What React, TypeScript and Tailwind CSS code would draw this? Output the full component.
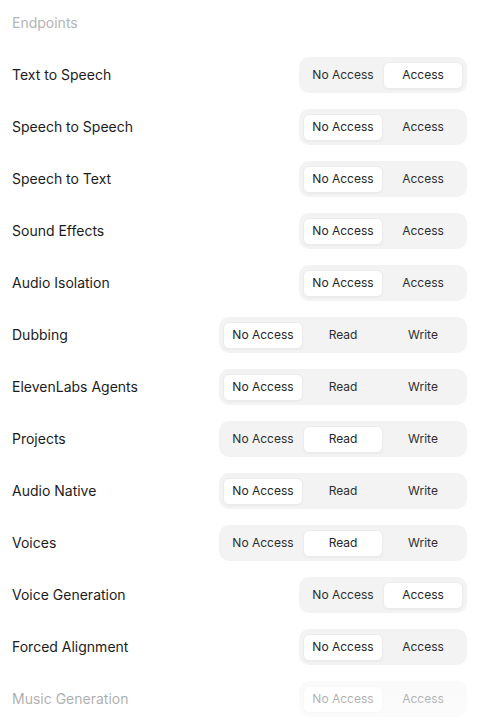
import React from 'react';

type Level = 'none' | 'access' | 'read' | 'write';

interface Endpoint {
  name: string;
  options: { key: Level; label: string }[];
  value: Level;
}

const binary = [
  { key: 'none' as Level, label: 'No Access' },
  { key: 'access' as Level, label: 'Access' },
];

const rw = [
  { key: 'none' as Level, label: 'No Access' },
  { key: 'read' as Level, label: 'Read' },
  { key: 'write' as Level, label: 'Write' },
];

const endpoints: Endpoint[] = [
  { name: 'Text to Speech', options: binary, value: 'access' },
  { name: 'Speech to Speech', options: binary, value: 'none' },
  { name: 'Speech to Text', options: binary, value: 'none' },
  { name: 'Sound Effects', options: binary, value: 'none' },
  { name: 'Audio Isolation', options: binary, value: 'none' },
  { name: 'Dubbing', options: rw, value: 'none' },
  { name: 'ElevenLabs Agents', options: rw, value: 'none' },
  { name: 'Projects', options: rw, value: 'read' },
  { name: 'Audio Native', options: rw, value: 'none' },
  { name: 'Voices', options: rw, value: 'read' },
  { name: 'Voice Generation', options: binary, value: 'access' },
  { name: 'Forced Alignment', options: binary, value: 'none' },
  { name: 'Music Generation', options: binary, value: 'none' },
];

function Segmented({ options, value }: { options: Endpoint['options']; value: Level }) {
  return (
    <div className="flex h-9 items-center rounded-[10px] bg-[#f3f3f4] p-1">
      {options.map((o) => (
        <button
          key={o.key}
          className={
            o.key === value
              ? 'flex h-[27px] w-20 items-center justify-center rounded-md border border-[#ececec] bg-white text-xs text-[#262626] shadow-[0_1px_2px_rgba(0,0,0,0.04)]'
              : 'flex h-[27px] w-20 items-center justify-center rounded-md border border-transparent text-xs text-[#2e2e2e]'
          }
        >
          {o.label}
        </button>
      ))}
    </div>
  );
}

export default function App() {
  return (
    <div
      className="relative h-[721px] w-[492px] overflow-hidden bg-white px-3 pt-[13px]"
      style={{ fontFamily: 'Inter, "Noto Sans", sans-serif' }}
    >
      <div className="text-sm leading-5 text-[#b4b4b4]">Endpoints</div>

      <div className="mt-6 flex flex-col gap-4 pr-[13px]">
        {endpoints.map((e) => (
          <div key={e.name} className="flex items-center justify-between">
            <span className="text-sm text-[#1c1c1c]">{e.name}</span>
            <Segmented options={e.options} value={e.value} />
          </div>
        ))}
      </div>

      {/* fade over the last row */}
      <div className="pointer-events-none absolute inset-x-0 bottom-0 h-[52px] bg-gradient-to-b from-white/55 to-white/70" />
    </div>
  );
}
